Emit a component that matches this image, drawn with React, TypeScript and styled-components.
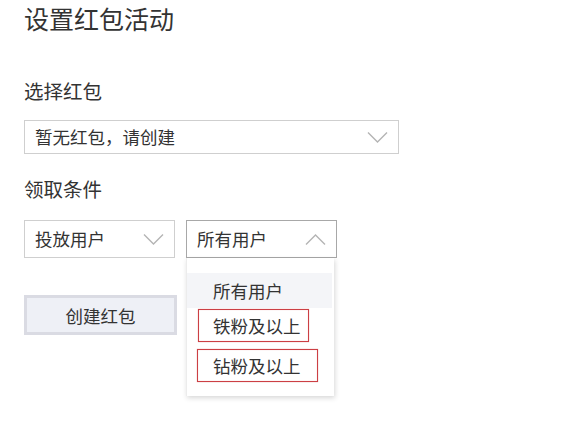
import React, { useState } from 'react'
import styled, { createGlobalStyle } from 'styled-components'

const GlobalStyle = createGlobalStyle`
  html, body {
    margin: 0;
    padding: 0;
    background: #fff;
  }
  body {
    font-family: "Noto Sans CJK SC", "Noto Sans", sans-serif;
    color: #333;
  }
`

// 下拉箭头
function Chevron({ up }: { up?: boolean }) {
  return (
    <svg width="21" height="11" viewBox="0 0 21 11" fill="none">
      <path
        d={up ? 'M1 10.5 L10.5 1 L20 10.5' : 'M1 0.5 L10.5 10 L20 0.5'}
        stroke="#b4b4b4"
        strokeWidth="1.4"
      />
    </svg>
  )
}

// 红框标注：left/width/top 依照截图
const options = [
  { id: 'all', text: '所有用户' },
  { id: 'iron', text: '铁粉及以上', mark: { left: 11, width: 111, top: 1 } },
  { id: 'diamond', text: '钻粉及以上', mark: { left: 10, width: 121, top: 6 } },
]

export default function App() {
  const [value] = useState('所有用户')

  return (
    <Page>
      <GlobalStyle />
      <Title>设置红包活动</Title>

      <Label $top={43}>选择红包</Label>
      <Select $width={375} $height={34} $top={17}>
        <SelectText>暂无红包，请创建</SelectText>
        <Chevron />
      </Select>

      <Label $top={23}>领取条件</Label>
      <Row>
        <Select $width={151} $height={38}>
          <SelectText>投放用户</SelectText>
          <Chevron />
        </Select>
        <DropWrap>
          <Select $width={151} $height={38} $active>
            <SelectText>{value}</SelectText>
            <Chevron up />
          </Select>
          <Menu>
            {options.map(({ id, text, mark }) => (
              <MenuItem key={id} $selected={text === value}>
                <ItemText $shift={mark ? mark.top - 1 : 0}>{text}</ItemText>
                {mark && (
                  <Marker style={{ left: mark.left, width: mark.width, top: mark.top }} />
                )}
              </MenuItem>
            ))}
          </Menu>
        </DropWrap>
      </Row>

      <CreateButton>创建红包</CreateButton>
    </Page>
  )
}

const Page = styled.div`
  padding: 0 0 0 24px;
  width: 545px;
  height: 428px;
  box-sizing: border-box;
`

const Title = styled.div`
  font-size: 25px;
  line-height: 36px;
  color: #333;
`

const Label = styled.div<{ $top: number }>`
  margin-top: ${p => p.$top}px;
  font-size: 19.5px;
  line-height: 24px;
  color: #333;
`

const Select = styled.div<{ $width: number; $height: number; $top?: number; $active?: boolean }>`
  display: flex;
  align-items: center;
  justify-content: space-between;
  box-sizing: border-box;
  width: ${p => p.$width}px;
  height: ${p => p.$height}px;
  margin-top: ${p => p.$top ?? 0}px;
  padding: 0 10px;
  border: 1px solid ${p => (p.$active ? '#a8a8a8' : '#cfcfcf')};
  background: #fff;
`

const SelectText = styled.span`
  font-size: 17.5px;
  line-height: 24px;
  color: #333;
`

const Row = styled.div`
  display: flex;
  gap: 11px;
  margin-top: 19px;
`

const DropWrap = styled.div`
  position: relative;
`

const Menu = styled.div`
  position: absolute;
  top: 100%;
  left: 0;
  z-index: 2;
  box-sizing: border-box;
  width: 148px;
  height: 138px;
  padding-top: 15px;
  background: #fff;
  border-left: 1px solid #ececec;
  box-shadow: 1px 2px 5px rgba(0, 0, 0, 0.16);
`

const MenuItem = styled.div<{ $selected?: boolean }>`
  position: relative;
  height: 35px;
  margin-right: 2px;
  padding-left: 26px;
  background: ${p => (p.$selected ? '#f4f5f8' : 'transparent')};
`

const ItemText = styled.span<{ $shift: number }>`
  position: relative;
  top: ${p => p.$shift}px;
  font-size: 17.5px;
  line-height: 35px;
  color: #333;
`

const Marker = styled.span`
  position: absolute;
  z-index: 1;
  height: 33px;
  box-sizing: border-box;
  border: 1px solid #cc3f44;
  box-shadow: 0 0 1px rgba(204, 63, 68, 0.5), inset 0 0 1px rgba(204, 63, 68, 0.4);
  pointer-events: none;
`

const CreateButton = styled.button`
  display: block;
  box-sizing: border-box;
  width: 153px;
  height: 40px;
  margin-top: 37px;
  padding: 0;
  border: 3px solid #dadbe3;
  background: #eef0f6;
  font-family: inherit;
  font-size: 17.5px;
  color: #333;
`
